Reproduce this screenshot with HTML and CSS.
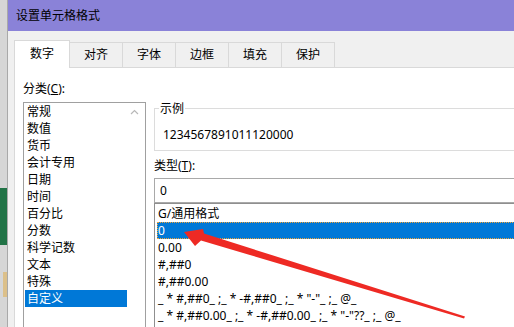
FILE: index.html
```html
<!DOCTYPE html>
<html lang="zh-CN">
<head>
    <meta charset="UTF-8">
    <title>设置单元格格式</title>
    <link rel="stylesheet" href="styles.css">
</head>
<body>

    <div id="screen">

        <!-- the excel sheet behind the dialog -->
        <div class="excel-strip">
            <div class="strip-green"></div>
            <div class="strip-tan"></div>
        </div>

        <div class="dialog">
            <div class="titlebar">设置单元格格式</div>

            <div class="dialog-body">
                <div class="tabs">
                    <div class="tab active">数字</div>
                    <div class="tab">对齐</div>
                    <div class="tab">字体</div>
                    <div class="tab">边框</div>
                    <div class="tab">填充</div>
                    <div class="tab">保护</div>
                </div>

                <div class="panel">
                    <div class="category">
                        <div class="field-label">分类(<u>C</u>):</div>
                        <div class="listbox category-list">
                            <ul class="items">
                                <li>常规</li>
                                <li>数值</li>
                                <li>货币</li>
                                <li>会计专用</li>
                                <li>日期</li>
                                <li>时间</li>
                                <li>百分比</li>
                                <li>分数</li>
                                <li>科学记数</li>
                                <li>文本</li>
                                <li>特殊</li>
                                <li class="selected">自定义</li>
                            </ul>
                            <div class="scrollbar">
                                <svg width="17" height="17" viewBox="0 0 17 17">
                                    <path d="M4 11 L7.5 7.5 L11 11" fill="none" stroke="#b8b8b8" stroke-width="1.2"/>
                                </svg>
                            </div>
                        </div>
                    </div>

                    <div class="format">
                        <fieldset class="sample">
                            <legend>示例</legend>
                            <div class="sample-value">1234567891011120000</div>
                        </fieldset>

                        <div class="field-label type-label">类型(<u>T</u>):</div>
                        <div class="type-input">0</div>

                        <ul class="listbox type-list">
                            <li>G/通用格式</li>
                            <li class="selected focused">0</li>
                            <li>0.00</li>
                            <li>#,##0</li>
                            <li>#,##0.00</li>
                            <li>_ * #,##0_ ;_ * -#,##0_ ;_ * "-"_ ;_ @_</li>
                            <li>_ * #,##0.00_ ;_ * -#,##0.00_ ;_ * "-"??_ ;_ @_</li>
                        </ul>
                    </div>
                </div>
            </div>
        </div>

        <!-- red annotation arrow drawn over the dialog -->
        <svg class="arrow" width="514" height="327" viewBox="0 0 514 327">
            <polygon points="184,232 203,229 204,233.5 465,316.5 464,318.5 201,240.5 195,246" fill="#ee2a24"/>
        </svg>
    </div>

</body>
</html>
```

FILE: styles.css
```css
body {
    margin: 0;
    font-family: "Noto Sans", "Noto Sans CJK SC", sans-serif;
    font-size: 12px;
    color: #000;
}
#screen {
    position: relative;
    width: 514px;
    height: 327px;
    overflow: hidden;
    display: flex;
    background-color: #d6d6d6;
}
.excel-strip {
    width: 7px;
    flex-shrink: 0;
    border-right: 1px solid #a9a9a9;
    display: flex;
    flex-direction: column;
}
.strip-green {
    margin-top: 188px;
    height: 57px;
    background-color: #217346;
}
.strip-tan {
    margin-top: 27px;
    margin-left: 3px;
    height: 25px;
    background-color: #dcc08a;
}
.dialog {
    width: 580px;
    flex-shrink: 0;
    background-color: #f0f0f0;
}
.titlebar {
    height: 31px;
    line-height: 31px;
    padding-left: 8px;
    background-color: #8a82d8;
}
.dialog-body {
    padding: 9px 0 0 6px;
}
.tabs {
    display: flex;
    align-items: flex-end;
    height: 27px;
}
.tab {
    box-sizing: border-box;
    height: 25px;
    line-height: 24px;
    padding: 0 14px;
    border-top: 1px solid #d9d9d9;
    border-right: 1px solid #d9d9d9;
    text-align: center;
}
.tab:first-child {
    border-left: 1px solid #d9d9d9;
}
.tab.active {
    position: relative;
    z-index: 1;
    height: 28px;
    line-height: 26px;
    margin-bottom: -1px;
    padding: 0 15px;
    background-color: #fff;
}
.panel {
    display: flex;
    height: 300px;
    background-color: #fff;
    border-top: 1px solid #d9d9d9;
    border-left: 1px solid #d9d9d9;
}
.field-label {
    line-height: 17px;
}
.category {
    padding: 12px 0 0 8px;
}
.category .field-label {
    margin-bottom: 5px;
}
.listbox {
    border: 1px solid #a0a0a0;
    background-color: #fff;
}
.category-list {
    display: flex;
    width: 121px;
    height: 240px;
}
.items,
.type-list {
    list-style: none;
    margin: 0;
}
.items {
    flex: 1;
    padding: 0 0 0 1px;
}
.items li {
    height: 17px;
    line-height: 17px;
    padding-left: 2px;
    white-space: nowrap;
}
.scrollbar {
    width: 18px;
}
.selected {
    background-color: #0078d7;
    color: #fff;
}
.format {
    flex: 1;
    margin-left: 8px;
    padding-top: 32px;
}
.sample {
    margin: 0;
    min-width: 0;
    padding: 0 0 7px 4px;
    border: 1px solid #dcdcdc;
}
.sample legend {
    padding: 0 1px;
    line-height: 17px;
}
.sample-value {
    margin-top: 9px;
    padding-left: 4px;
    line-height: 17px;
}
.type-label {
    margin-top: 6px;
}
.type-input {
    margin-top: 4px;
    height: 23px;
    line-height: 23px;
    padding-left: 5px;
    border: 1px solid #a9a9a9;
}
.type-list {
    height: 140px;
    padding: 1px 0 0 2px;
    border-color: #8f8f8f;
}
.type-list li {
    height: 17px;
    line-height: 17px;
    padding-left: 1px;
    white-space: nowrap;
}
.focused {
    outline: 1px dotted #f0a43a;
    outline-offset: -1px;
}
.arrow {
    position: absolute;
    left: 0;
    top: 0;
    pointer-events: none;
}
```
